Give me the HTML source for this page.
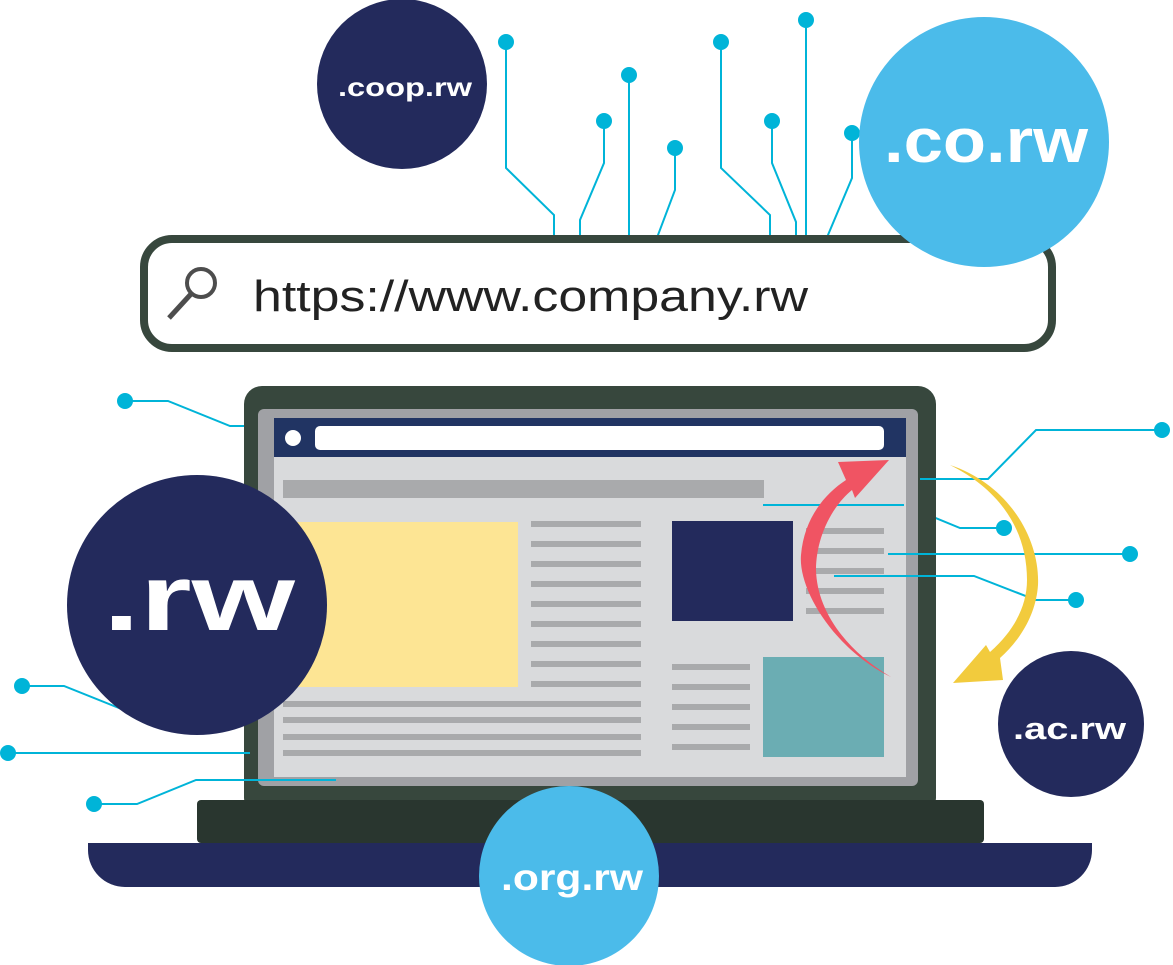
<!DOCTYPE html>
<html><head><meta charset="utf-8"><style>
html,body{margin:0;padding:0;background:#fff;width:1173px;height:965px;overflow:hidden}
svg{display:block}
text{font-family:"Liberation Sans",sans-serif}
</style></head><body>
<svg width="1173" height="965" viewBox="0 0 1173 965" xmlns="http://www.w3.org/2000/svg">
<g fill="none" stroke="#00b4d8" stroke-width="2">
<polyline points="506,42 506,168 554,215 554,240"/>
<polyline points="604,121 604,163 580,220 580,240"/>
<polyline points="629,75 629,240"/>
<polyline points="675,148 675,190 658,235 658,240"/>
<polyline points="721,42 721,168 770,215 770,240"/>
<polyline points="772,121 772,163 796,222 796,240"/>
<polyline points="806,20 806,240"/>
<polyline points="852,133 852,178 828,235 828,240"/>
<polyline points="125,401 168,401 230,426 246,426"/>
<polyline points="22,686 64,686 124,710 265,710"/>
<polyline points="8,753 250,753"/>
<polyline points="94,804 137,804 196,780 336,780"/>
<polyline points="1162,430 1036,430 988,479 920,479"/>
<polyline points="1004,528 960,528 904,505 763,505"/>
<polyline points="1130,554 888,554"/>
<polyline points="1076,600 1036,600 974,576 834,576"/>
</g>
<g fill="#00b4d8">
<circle cx="506" cy="42" r="8"/><circle cx="604" cy="121" r="8"/><circle cx="629" cy="75" r="8"/><circle cx="675" cy="148" r="8"/>
<circle cx="721" cy="42" r="8"/><circle cx="772" cy="121" r="8"/><circle cx="806" cy="20" r="8"/><circle cx="852" cy="133" r="8"/>
<circle cx="125" cy="401" r="8"/><circle cx="22" cy="686" r="8"/><circle cx="8" cy="753" r="8"/><circle cx="94" cy="804" r="8"/>
<circle cx="1162" cy="430" r="8"/><circle cx="1004" cy="528" r="8"/><circle cx="1130" cy="554" r="8"/><circle cx="1076" cy="600" r="8"/>
</g>
<rect x="144" y="239" width="908" height="109" rx="28" fill="#fff" stroke="#37473d" stroke-width="8"/>
<circle cx="201" cy="283" r="14" fill="none" stroke="#4d4d4d" stroke-width="4"/>
<line x1="191" y1="294" x2="169" y2="318" stroke="#4d4d4d" stroke-width="5"/>
<text x="253" y="311" font-size="44" fill="#222" textLength="555" lengthAdjust="spacingAndGlyphs">https://www.company.rw</text>
<rect x="244" y="386" width="692" height="430" rx="18" fill="#37473d"/>
<rect x="258" y="409" width="660" height="377" rx="6" fill="#a0a1a5"/>
<rect x="274" y="418" width="632" height="359" fill="#d9dadc"/>
<rect x="274" y="418" width="632" height="39" fill="#213463"/>
<ellipse cx="293" cy="438" rx="8" ry="8" fill="#fff"/>
<rect x="315" y="426" width="569" height="24" rx="5" fill="#fff"/>
<rect x="283" y="480" width="481" height="18" fill="#a9aaac"/>
<rect x="283" y="522" width="235" height="165" fill="#fde594"/>
<g fill="#a9aaac">
<rect x="531" y="521" width="110" height="6"/><rect x="531" y="541" width="110" height="6"/><rect x="531" y="561" width="110" height="6"/>
<rect x="531" y="581" width="110" height="6"/><rect x="531" y="601" width="110" height="6"/><rect x="531" y="621" width="110" height="6"/>
<rect x="531" y="641" width="110" height="6"/><rect x="531" y="661" width="110" height="6"/><rect x="531" y="681" width="110" height="6"/>
<rect x="283" y="701" width="358" height="6"/><rect x="283" y="717" width="358" height="6"/><rect x="283" y="734" width="358" height="6"/><rect x="283" y="750" width="358" height="6"/>
<rect x="806" y="528" width="78" height="6"/><rect x="806" y="548" width="78" height="6"/><rect x="806" y="568" width="78" height="6"/><rect x="806" y="588" width="78" height="6"/><rect x="806" y="608" width="78" height="6"/>
<rect x="672" y="664" width="78" height="6"/><rect x="672" y="684" width="78" height="6"/><rect x="672" y="704" width="78" height="6"/><rect x="672" y="724" width="78" height="6"/><rect x="672" y="744" width="78" height="6"/>
</g>
<rect x="672" y="521" width="121" height="100" fill="#232a5c"/>
<rect x="763" y="657" width="121" height="100" fill="#6badb3"/>
<g fill="none" stroke="#00b4d8" stroke-width="2">
<polyline points="988,479 920,479"/><polyline points="904,505 763,505"/><polyline points="1000,554 888,554"/><polyline points="974,576 834,576"/>
<polyline points="124,710 265,710"/><polyline points="8,753 250,753"/><polyline points="196,780 336,780"/>
</g>
<path d="M891,677 C835,650 798,590 801,555 C804,520 823,495 846,480 L838,462 L889,460 L855,498 L852,490 C830,508 816,540 816,570 C817,610 845,650 891,677 Z" fill="#f05463"/>
<path d="M950,465 C1010,485 1040,540 1038,585 C1036,615 1020,640 1000,658 L1003,680 L953,683 L986,645 L990,652 C1015,630 1027,605 1027,580 C1027,530 1000,490 950,465 Z" fill="#f2cb3d"/>
<rect x="197" y="800" width="787" height="43" rx="4" fill="#29362f"/>
<path d="M88,843 H1092 V850 A37,37 0 0 1 1055,887 H125 A37,37 0 0 1 88,850 Z" fill="#232a5c"/>
<circle cx="402" cy="84" r="85" fill="#232a5c"/>
<text x="338" y="96" font-size="26" font-weight="bold" fill="#fff" textLength="134" lengthAdjust="spacingAndGlyphs">.coop.rw</text>
<circle cx="984" cy="142" r="125" fill="#4bbbea"/>
<text x="884" y="162" font-size="62" font-weight="bold" fill="#fff" textLength="204" lengthAdjust="spacingAndGlyphs">.co.rw</text>
<circle cx="197" cy="605" r="130" fill="#232a5c"/>
<text x="103" y="630" font-size="94" font-weight="bold" fill="#fff" textLength="192" lengthAdjust="spacingAndGlyphs">.rw</text>
<circle cx="1071" cy="724" r="73" fill="#232a5c"/>
<text x="1013" y="739" font-size="31" font-weight="bold" fill="#fff" textLength="113" lengthAdjust="spacingAndGlyphs">.ac.rw</text>
<circle cx="569" cy="876" r="90" fill="#4bbbea"/>
<text x="501" y="890" font-size="37" font-weight="bold" fill="#fff" textLength="142" lengthAdjust="spacingAndGlyphs">.org.rw</text>
</svg>
</body></html>
